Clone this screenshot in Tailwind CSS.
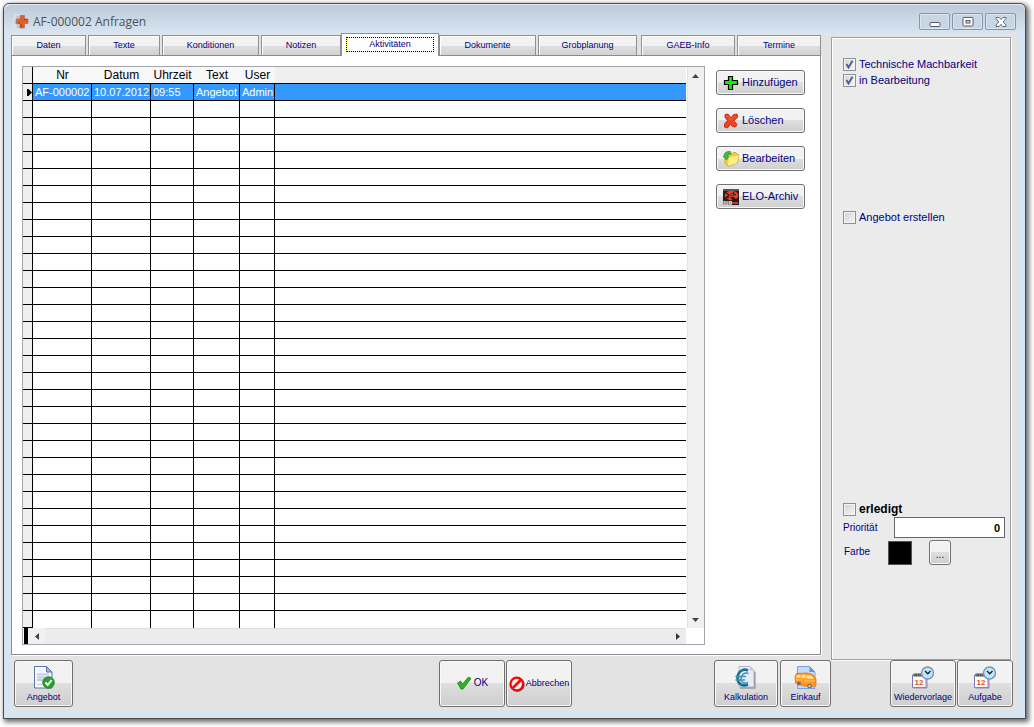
<!DOCTYPE html>
<html lang="de">
<head>
<meta charset="utf-8">
<meta name="viewport" content="width=device-width, initial-scale=1">
<title>AF-000002 Anfragen</title>
<script src="https://cdn.jsdelivr.net/npm/@tailwindcss/browser@4"></script>
</head>
<body class="bg-white font-['Liberation_Sans',Arial,sans-serif] text-[#000080]">
<div class="flex min-h-screen flex-col pt-[3px] pr-2 pb-2 pl-[3px]">
<div class="flex flex-1 flex-col rounded-t-md border border-[#4a4a4a] bg-[#d7e4f1] pr-2 pb-[7px] pl-[7px] shadow-[2px_2px_5px_1px_#00000099]">

  <!-- Title bar -->
  <header class="-mr-2 -ml-[7px] flex h-[29px] items-center rounded-t-md bg-linear-to-b from-[#bccad8] to-[#d7e4f1] px-[9px] pt-1.5 shadow-[inset_0_1px_0_#e8eff6]">
    <svg class="mr-1 h-4 w-4 shrink-0" viewBox="0 0 16 16" aria-hidden="true">
      <path d="M2 1h5v4h4v5H8v5H3v-4H.5V5H2z" fill="#c3c8cc" stroke="#e6eaee"/>
      <path d="M7 1.500h4.500V5H15v4.500h-3.500V14H7V9.500H3.500V5H7z" fill="#ee5a20" stroke="#a06a58" stroke-width=".6"/>
      <path d="M8 6h2v2H8z" fill="#5c83b0"/><path d="M11 5h3v1h-3zM7.500 10h1v3h-1zM5 8.500h2v1H5z" fill="#a33d18"/>
    </svg>
    <h1 class="flex-1 font-['Open_Sans',sans-serif] text-xs text-[#4c5358]">AF-000002 Anfragen</h1>
    <div class="flex gap-0.5">
      <button aria-label="Minimieren" class="grid h-[17px] w-[31px] place-items-center rounded-xs border border-[#8795a8] bg-[#c8d5e3] shadow-[inset_0_0_0_1px_#dbe5ef]">
        <svg class="h-3 w-3" viewBox="0 0 12 12"><rect x="1" y="6.500" width="10" height="4" rx="1" fill="#fff" stroke="#555b66"/></svg></button>
      <button aria-label="Maximieren" class="grid h-[17px] w-[31px] place-items-center rounded-xs border border-[#8795a8] bg-[#c8d5e3] shadow-[inset_0_0_0_1px_#dbe5ef]">
        <svg class="h-3 w-3" viewBox="0 0 12 12"><rect x="1" y="1.500" width="10" height="8.500" rx="1" fill="#fff" stroke="#555b66"/><rect x="4" y="4.500" width="4" height="2.500" fill="#c8d5e3" stroke="#555b66"/></svg></button>
      <button aria-label="Schließen" class="grid h-[17px] w-[31px] place-items-center rounded-xs border border-[#8795a8] bg-[#c8d5e3] shadow-[inset_0_0_0_1px_#dbe5ef]">
        <svg class="h-3 w-3" viewBox="0 0 12 12"><path d="M1 1.500h3L6 3.500 8 1.500h3v1L8.200 6 11 9v1.500H8L6 8.300 4 10.500H1V9l2.800-3L1 2.500z" fill="#fff" stroke="#555b66" stroke-width=".9"/></svg></button>
    </div>
  </header>

  <div class="flex flex-1 flex-col bg-[#e3e3e3] pb-1">
    <div class="flex flex-1 gap-2.5 pr-1.5">

      <main class="flex min-w-0 flex-1 flex-col pb-[5px]">
        <div role="tablist" class="grid h-[22px] grid-cols-[77fr_74fr_99fr_80fr_98fr_99fr_103fr_96fr_84fr] items-end text-[9px]">
          <button role="tab" class="mr-0.5 h-5 border border-b-0 border-[#8f8f98] bg-linear-to-b from-[#f2f2f2] from-50% via-[#e0e0e0] via-50% to-[#d2d2d2] pt-px shadow-[inset_1px_1px_0_#fff]">Daten</button>
          <button role="tab" class="mr-0.5 h-5 border border-b-0 border-[#8f8f98] bg-linear-to-b from-[#f2f2f2] from-50% via-[#e0e0e0] via-50% to-[#d2d2d2] pt-px shadow-[inset_1px_1px_0_#fff]">Texte</button>
          <button role="tab" class="mr-0.5 h-5 border border-b-0 border-[#8f8f98] bg-linear-to-b from-[#f2f2f2] from-50% via-[#e0e0e0] via-50% to-[#d2d2d2] pt-px shadow-[inset_1px_1px_0_#fff]">Konditionen</button>
          <button role="tab" class="h-5 border border-b-0 border-[#8f8f98] bg-linear-to-b from-[#f2f2f2] from-50% via-[#e0e0e0] via-50% to-[#d2d2d2] pt-px shadow-[inset_1px_1px_0_#fff]">Notizen</button>
          <button role="tab" aria-selected="true" class="z-10 -mb-px h-[23px] border border-b-0 border-[#8f8f98] bg-white px-1 pt-[3px] pb-1">
            <span class="block bg-[#ffff66]"><span class="block border border-dotted border-black bg-white bg-clip-padding leading-[13px]">Aktivitäten</span></span></button>
          <button role="tab" class="mr-0.5 h-5 border border-b-0 border-[#8f8f98] bg-linear-to-b from-[#f2f2f2] from-50% via-[#e0e0e0] via-50% to-[#d2d2d2] pt-px shadow-[inset_1px_1px_0_#fff]">Dokumente</button>
          <button role="tab" class="mr-1 h-5 border border-b-0 border-[#8f8f98] bg-linear-to-b from-[#f2f2f2] from-50% via-[#e0e0e0] via-50% to-[#d2d2d2] pt-px shadow-[inset_1px_1px_0_#fff]">Grobplanung</button>
          <button role="tab" class="mr-0.5 h-5 border border-b-0 border-[#8f8f98] bg-linear-to-b from-[#f2f2f2] from-50% via-[#e0e0e0] via-50% to-[#d2d2d2] pt-px shadow-[inset_1px_1px_0_#fff]">GAEB-Info</button>
          <button role="tab" class="h-5 border border-b-0 border-[#8f8f98] bg-linear-to-b from-[#f2f2f2] from-50% via-[#e0e0e0] via-50% to-[#d2d2d2] pt-px shadow-[inset_1px_1px_0_#fff]">Termine</button>
        </div>

        <section role="tabpanel" class="flex flex-1 gap-[11px] border border-[#8a8a92] bg-white pt-2.5 pr-[15px] pb-[9px] pl-2.5 shadow-[1px_1px_0_#fff]">
          <div class="flex min-w-0 flex-1 flex-col border border-[#a5a5ad]">
            <div class="flex">
              <table class="w-full table-fixed border-separate border-spacing-0 text-[11px] leading-none">
                <colgroup><col class="w-2.5"><col class="w-[59px]"><col class="w-[59px]"><col class="w-[43px]"><col class="w-[46px]"><col class="w-[35px]"><col></colgroup>
                <thead>
                  <tr class="h-[17px] bg-[#efefef] text-xs leading-none text-black [&>th]:border-b [&>th]:border-black [&>th]:p-0 [&>th]:font-normal [&>th]:whitespace-nowrap">
                    <th class="border-r"></th>
                    <th class="bg-[#f8f8f8]">Nr</th><th class="bg-[#f8f8f8]">Datum</th><th class="bg-[#f8f8f8]">Uhrzeit</th><th class="bg-[#f8f8f8]">Text</th><th class="bg-[#f8f8f8]">User</th><th></th>
                  </tr>
                </thead>
                <tbody id="rows">
                  <tr class="h-[17px] bg-[#3399ff] text-white [&>td]:border-r [&>td]:border-b [&>td]:border-black [&>td]:p-0 [&>td]:pl-0.5 [&>td]:whitespace-nowrap [&>td:last-child]:border-r-0">
                    <td class="bg-[#efefef]"><svg class="ml-px h-[7px] w-1.5" viewBox="0 0 6 7" aria-hidden="true"><path d="M1 0h1.500L6 3.500 2.500 7H1z"/></svg></td>
                    <td>AF-000002</td><td>10.07.2012</td><td>09:55</td><td>Angebot</td><td>Admin</td><td></td>
                  </tr>
                </tbody>
              </table>
              <div class="ml-px flex w-[17px] shrink-0 flex-col justify-between bg-[#f0f0f0] shadow-[inset_1px_0_0_#e3e3e3]">
                <button aria-label="Nach oben" class="grid h-[17px] place-items-center"><svg class="h-1 w-[7px]" viewBox="0 0 7 4"><path d="M0 4 3.500 0 7 4z" fill="#444"/></svg></button>
                <button aria-label="Nach unten" class="grid h-[17px] place-items-center"><svg class="h-1 w-[7px]" viewBox="0 0 7 4"><path d="M0 0 3.500 4 7 0z" fill="#444"/></svg></button>
              </div>
            </div>
            <div class="mr-[18px] flex h-4 items-stretch bg-[#ececec] shadow-[inset_0_1px_0_#dedede]">
              <div class="w-[5px] border-l border-white bg-black"></div>
              <button aria-label="Nach links" class="grid w-[17px] place-items-center bg-[#f0f0f0]"><svg class="h-[7px] w-1" viewBox="0 0 4 7"><path d="M4 0 0 3.500 4 7z" fill="#444"/></svg></button>
              <div class="flex-1"></div>
              <button aria-label="Nach rechts" class="grid w-[17px] place-items-center"><svg class="h-[7px] w-1" viewBox="0 0 4 7"><path d="M0 0 4 3.500 0 7z" fill="#333"/></svg></button>
            </div>
          </div>

          <div class="flex w-[89px] shrink-0 flex-col gap-[13px] pt-1 text-[11px]">
            <button class="flex h-[25px] items-center gap-[3px] rounded-[3px] border border-[#707070] bg-linear-to-b from-[#f2f2f2] from-50% via-[#dedede] via-50% to-[#cfcfcf] pl-1.5 shadow-[inset_0_0_0_1px_#fafafa]">
              <svg class="h-4 w-4 shrink-0" viewBox="0 0 16 16"><path d="M5.500 1.500h4v4h5v4h-5v5h-4v-5h-4v-4h4z" fill="#00f800" stroke="#000" stroke-width="1.200"/></svg>Hinzufügen</button>
            <button class="flex h-[25px] items-center gap-[3px] rounded-[3px] border border-[#707070] bg-linear-to-b from-[#f2f2f2] from-50% via-[#dedede] via-50% to-[#cfcfcf] pl-1.5 shadow-[inset_0_0_0_1px_#fafafa]">
              <svg class="h-4 w-4 shrink-0" viewBox="0 0 16 16"><path d="M2 1.500 5 1l3 4 2.500-3.500L14 1l.8 3L11 7.800l3 3.700-1.500 2.500-3-.3L7.500 11l-3 4L1.500 14v-3l3-3.500L2 4.500z" fill="#f0441e" stroke="#c01818" stroke-width=".8"/><path d="m3.500 2.500 4 4.500 4-4.500" fill="none" stroke="#f8663c"/></svg>Löschen</button>
            <button class="flex h-[25px] items-center gap-[3px] rounded-[3px] border border-[#707070] bg-linear-to-b from-[#f2f2f2] from-50% via-[#dedede] via-50% to-[#cfcfcf] pl-1.5 shadow-[inset_0_0_0_1px_#fafafa]">
              <svg class="h-4 w-4 shrink-0" viewBox="0 0 16 16"><path d="M2 4 9 3l1-1.500h3L13.500 3 16 3.500 14.500 12 5 15.500 2 12z" fill="#f0cf3c" stroke="#c9a21c" stroke-width=".7"/><path d="m6 6.500 9.500-2-1.500 7.500-9 3z" fill="#ffee88"/><path d="M7.500.5C3 0 1 2 1 5l-1 .5L3.500 9 6 5H4.500C4.500 3.500 5.500 3 8 3.500z" fill="#4bb93c" stroke="#26832a" stroke-width=".6"/></svg>Bearbeiten</button>
            <button class="flex h-[25px] items-center gap-[3px] rounded-[3px] border border-[#707070] bg-linear-to-b from-[#f2f2f2] from-50% via-[#dedede] via-50% to-[#cfcfcf] pl-1.5 shadow-[inset_0_0_0_1px_#fafafa]">
              <svg class="h-4 w-4 shrink-0" viewBox="0 0 16 16"><path d="M0 0h16v16H0z" fill="#291c1c"/><path d="M0 0h16v2H0z" fill="#5b5555"/><ellipse cx="8.500" cy="6.500" rx="6.800" ry="4.700" fill="#f0401f"/><path d="m3 4 3 2-3 3 3-1M11 3l-1 2 3 1" fill="none" stroke="#1d1717" stroke-width="1.200"/><path d="M7 8h4l3 3.500h-4z" fill="#1d1717"/><circle cx="9" cy="5.800" r="1.600" fill="#1d1717"/><circle cx="9" cy="5.800" r=".7" fill="#f4c7bc"/><path d="M0 12h9v4H0z" fill="#8b8585"/><path d="M1 12.500h1.500M1 14h1.500M1 15.500h1.500M4 12.500v3h1M6.500 12.500h2v2.500h-2z" stroke="#eee" fill="none" stroke-width=".7"/><path d="M9 14h6" stroke="#f04030" stroke-width="1.500"/></svg>ELO-Archiv</button>
          </div>
        </section>
      </main>

      <aside class="mt-1 flex w-[180px] shrink-0 flex-col border border-[#a0a0a0] bg-[#ebebeb] pt-[18px] pr-[5px] pb-[94px] pl-[11px] text-[11px] shadow-[inset_1px_1px_0_#fff,1px_1px_0_#fff]">
        <label class="flex h-4 items-center gap-[3px]">
          <span class="grid shrink-0 place-items-center">
            <input type="checkbox" checked class="peer col-start-1 row-start-1 h-[13px] w-[13px] appearance-none border border-[#8e8f8f] bg-linear-to-br from-[#cfd3d8] to-[#f6f6f6] shadow-[inset_0_0_0_1px_#f4f4f4]">
            <svg class="pointer-events-none invisible col-start-1 row-start-1 h-[9px] w-[9px] peer-checked:visible" viewBox="0 0 9 9"><path d="m1.500 4 2 3.500L7.500.8" fill="none" stroke="#4a5f97" stroke-width="1.900"/></svg>
          </span>Technische Machbarkeit</label>
        <label class="flex h-4 items-center gap-[3px]">
          <span class="grid shrink-0 place-items-center">
            <input type="checkbox" checked class="peer col-start-1 row-start-1 h-[13px] w-[13px] appearance-none border border-[#8e8f8f] bg-linear-to-br from-[#cfd3d8] to-[#f6f6f6] shadow-[inset_0_0_0_1px_#f4f4f4]">
            <svg class="pointer-events-none invisible col-start-1 row-start-1 h-[9px] w-[9px] peer-checked:visible" viewBox="0 0 9 9"><path d="m1.500 4 2 3.500L7.500.8" fill="none" stroke="#4a5f97" stroke-width="1.900"/></svg>
          </span>in Bearbeitung</label>
        <label class="mt-[121px] flex h-4 items-center gap-[3px]">
          <input type="checkbox" class="h-[13px] w-[13px] shrink-0 appearance-none border border-[#8e8f8f] bg-linear-to-br from-[#cfd3d8] to-[#f6f6f6] shadow-[inset_0_0_0_1px_#f4f4f4]">Angebot erstellen</label>

        <label class="mt-auto flex h-4 items-center gap-[3px] text-xs font-bold text-black">
          <input type="checkbox" class="h-[13px] w-[13px] shrink-0 appearance-none border border-[#8e8f8f] bg-linear-to-br from-[#cfd3d8] to-[#f6f6f6] shadow-[inset_0_0_0_1px_#f4f4f4]">erledigt</label>
        <div class="flex items-center text-[10px]">
          <label for="prio" class="w-[51px] shrink-0">Priorität</label>
          <input id="prio" type="text" value="0" class="h-[21px] min-w-0 flex-1 border border-[#666] bg-white pr-1 text-right text-[11px] font-bold text-black">
        </div>
        <div class="mt-0.5 flex items-center text-[10px]">
          <label for="farbe" class="w-[45px] shrink-0 pb-0.5 pl-px">Farbe</label>
          <span class="h-6 w-6 border border-[#555] bg-black"></span>
          <button id="farbe" class="ml-[17px] h-[25px] w-[22px] rounded-[3px] border border-[#707070] bg-linear-to-b from-[#f2f2f2] from-50% via-[#dedede] via-50% to-[#cfcfcf] pt-1 shadow-[inset_0_0_0_1px_#fafafa]">...</button>
        </div>
      </aside>
    </div>

    <!-- Action bar -->
    <footer class="flex h-[47px] pr-1 pl-[3px] text-[9px] leading-3 [&>button]:shrink-0 [&>button]:rounded-[3px] [&>button]:border [&>button]:border-[#707070] [&>button]:bg-linear-to-b [&>button]:from-[#f2f2f2] [&>button]:from-50% [&>button]:via-[#dedede] [&>button]:via-50% [&>button]:to-[#cfcfcf] [&>button]:shadow-[inset_0_0_0_1px_#f8f8f8]">
      <button class="flex w-[59px] flex-col items-center gap-px pt-[5px]">
        <svg class="h-6 w-6 shrink-0" viewBox="0 0 24 24"><path d="M2.500.5h12L20 6v16H2.500z" fill="#f4f7ff" stroke="#5d74a6"/><path d="M14.500.5V6H20z" fill="#9fb9e0" stroke="#5d74a6"/><path d="M5 8.500h12M5 11.500h9M5 14h6" stroke="#c3cce6" stroke-width="1.800"/><path d="M5 18.500h5" stroke="#c3cce6"/><circle cx="16.500" cy="16.500" r="5.800" fill="#22a52a" stroke="#0f7a18" stroke-width=".8"/><path d="m13.500 16.500 2.200 2.500 4-5" fill="none" stroke="#fff" stroke-width="2"/></svg>Angebot</button>
      <div class="grow-[366]"></div>
      <button class="mr-px flex w-[66px] items-center justify-center gap-0.5 pb-0.5 text-[10px]">
        <svg class="h-4 w-4" viewBox="0 0 16 16"><path d="m1.500 8 3-2 2 3 6-7 2.500 1.500L7 14H5z" fill="#2fb322" stroke="#16850f" stroke-width=".8"/></svg>OK</button>
      <button class="flex w-[66px] items-center justify-center gap-px">
        <svg class="h-4 w-4 shrink-0" viewBox="0 0 16 16"><circle cx="8.500" cy="8.700" r="6.300" fill="none" stroke="#666" stroke-width="1.800"/><circle cx="7.800" cy="8" r="6.300" fill="#eee" stroke="#f00" stroke-width="2.200"/><path d="m3.800 12.800 8.800-8.800" stroke="#777" stroke-width="2"/><path d="m3.300 12.200 8.800-8.800" stroke="#f00" stroke-width="2.200"/></svg><span class="pb-0.5">Abbrechen</span></button>
      <div class="grow-[142]"></div>
      <button class="mr-0.5 flex w-16 flex-col items-center gap-px pt-[5px]">
        <svg class="h-6 w-6 shrink-0" viewBox="0 0 24 24"><path d="M5 .5h11L20 4.500V21H5z" fill="#e6ecf8" stroke="#b0b8c8"/><path d="M16 .5v4h4z" fill="#b9c6db"/><path d="M20.800 5.500V22H6" fill="none" stroke="#9c9c9c" stroke-width="1.600"/><path d="M14 4.500C9 2 3.500 6 3.500 12S8.500 21 14 18.500" fill="none" stroke="#1d7090" stroke-width="2.600"/><path d="M14.500 7.500C11 6 7 8.500 7 12.500s3 5.500 7 4M1.500 10.500H12M1.500 14H11" fill="none" stroke="#3f93ac" stroke-width="1.500"/></svg>Kalkulation</button>
      <button class="flex w-[51px] flex-col items-center gap-px pt-[5px]">
        <svg class="h-6 w-6 shrink-0" viewBox="0 0 24 24"><path d="M3.500.5h12L21 6v16.500H3.500z" fill="#c4d8fa" stroke="#7ba0de"/><path d="M15.500.5V6H21z" fill="#5f96e6"/><path d="M1 10.500 2.500 7.500 13 7l5.500 1.500 3.500 4.500v6l-3 2-9-1-8.500-3z" fill="#ff9a1c" stroke="#d06a10" stroke-width=".7"/><path d="m3 9 3.500-.3v3.200l-4.500-.4zM7.500 8.700l4 .1v3.600l-4-.4zM12.500 9l5 .8 2.500 3.200-7.500-.5z" fill="#ffe19a"/><path d="M10 15h11M2 13.500l6 .8" stroke="#ffc860"/><circle cx="5" cy="17.500" r="2" fill="#8a6858"/><circle cx="15.500" cy="20" r="2.300" fill="#8a6858"/><circle cx="15.500" cy="20" r="1.100" fill="#ddd"/></svg>Einkauf</button>
      <div class="grow-[59]"></div>
      <button class="mr-px flex w-[66px] flex-col items-center gap-px pt-[5px]">
        <svg class="h-6 w-6 shrink-0" viewBox="0 0 24 24"><path d="M1.500 9H15v12.500H1.500z" fill="#fff" stroke="#7a78b8"/><path d="M2.500 22h13.500V10" stroke="#8d8bc0" fill="none"/><path d="M2.500 7.500h9v3h-9z" fill="#4b4b55"/><path d="M4 7v3M6.500 7v3M9 7v3" stroke="#aaa" stroke-width=".7"/><text x="3.500" y="18.500" font-family="Liberation Sans" font-size="8" font-weight="bold" fill="#f04a10">12</text><circle cx="16.500" cy="7" r="6" fill="#bfe6fa" stroke="#7a93b0" stroke-width="1.400"/><path d="m14 5 2.800 2.800L19.500 5" fill="none" stroke="#123" stroke-width="1.300"/></svg>Wiedervorlage</button>
      <button class="flex w-14 flex-col items-center gap-px pt-[5px]">
        <svg class="h-6 w-6 shrink-0" viewBox="0 0 24 24"><path d="M1.500 9H15v12.500H1.500z" fill="#fff" stroke="#7a78b8"/><path d="M2.500 22h13.500V10" stroke="#8d8bc0" fill="none"/><path d="M2.500 7.500h9v3h-9z" fill="#4b4b55"/><path d="M4 7v3M6.500 7v3M9 7v3" stroke="#aaa" stroke-width=".7"/><text x="3.500" y="18.500" font-family="Liberation Sans" font-size="8" font-weight="bold" fill="#f04a10">12</text><circle cx="16.500" cy="7" r="6" fill="#bfe6fa" stroke="#7a93b0" stroke-width="1.400"/><path d="m14 5 2.800 2.800L19.500 5" fill="none" stroke="#123" stroke-width="1.300"/></svg>Aufgabe</button>
    </footer>
  </div>
</div>
</div>
<script>
  // Fill the grid with empty rows below the data row.
  const emptyRow = '<tr class="h-[17px] [&>td]:border-r [&>td]:border-b [&>td]:border-black [&>td]:p-0 [&>td:last-child]:border-r-0 last:[&>td:not(:first-child)]:border-b-0"><td class="bg-[#efefef]"></td><td></td><td></td><td></td><td></td><td></td><td></td></tr>';
  document.getElementById('rows').insertAdjacentHTML('beforeend', emptyRow.repeat(31));
</script>
</body>
</html>
